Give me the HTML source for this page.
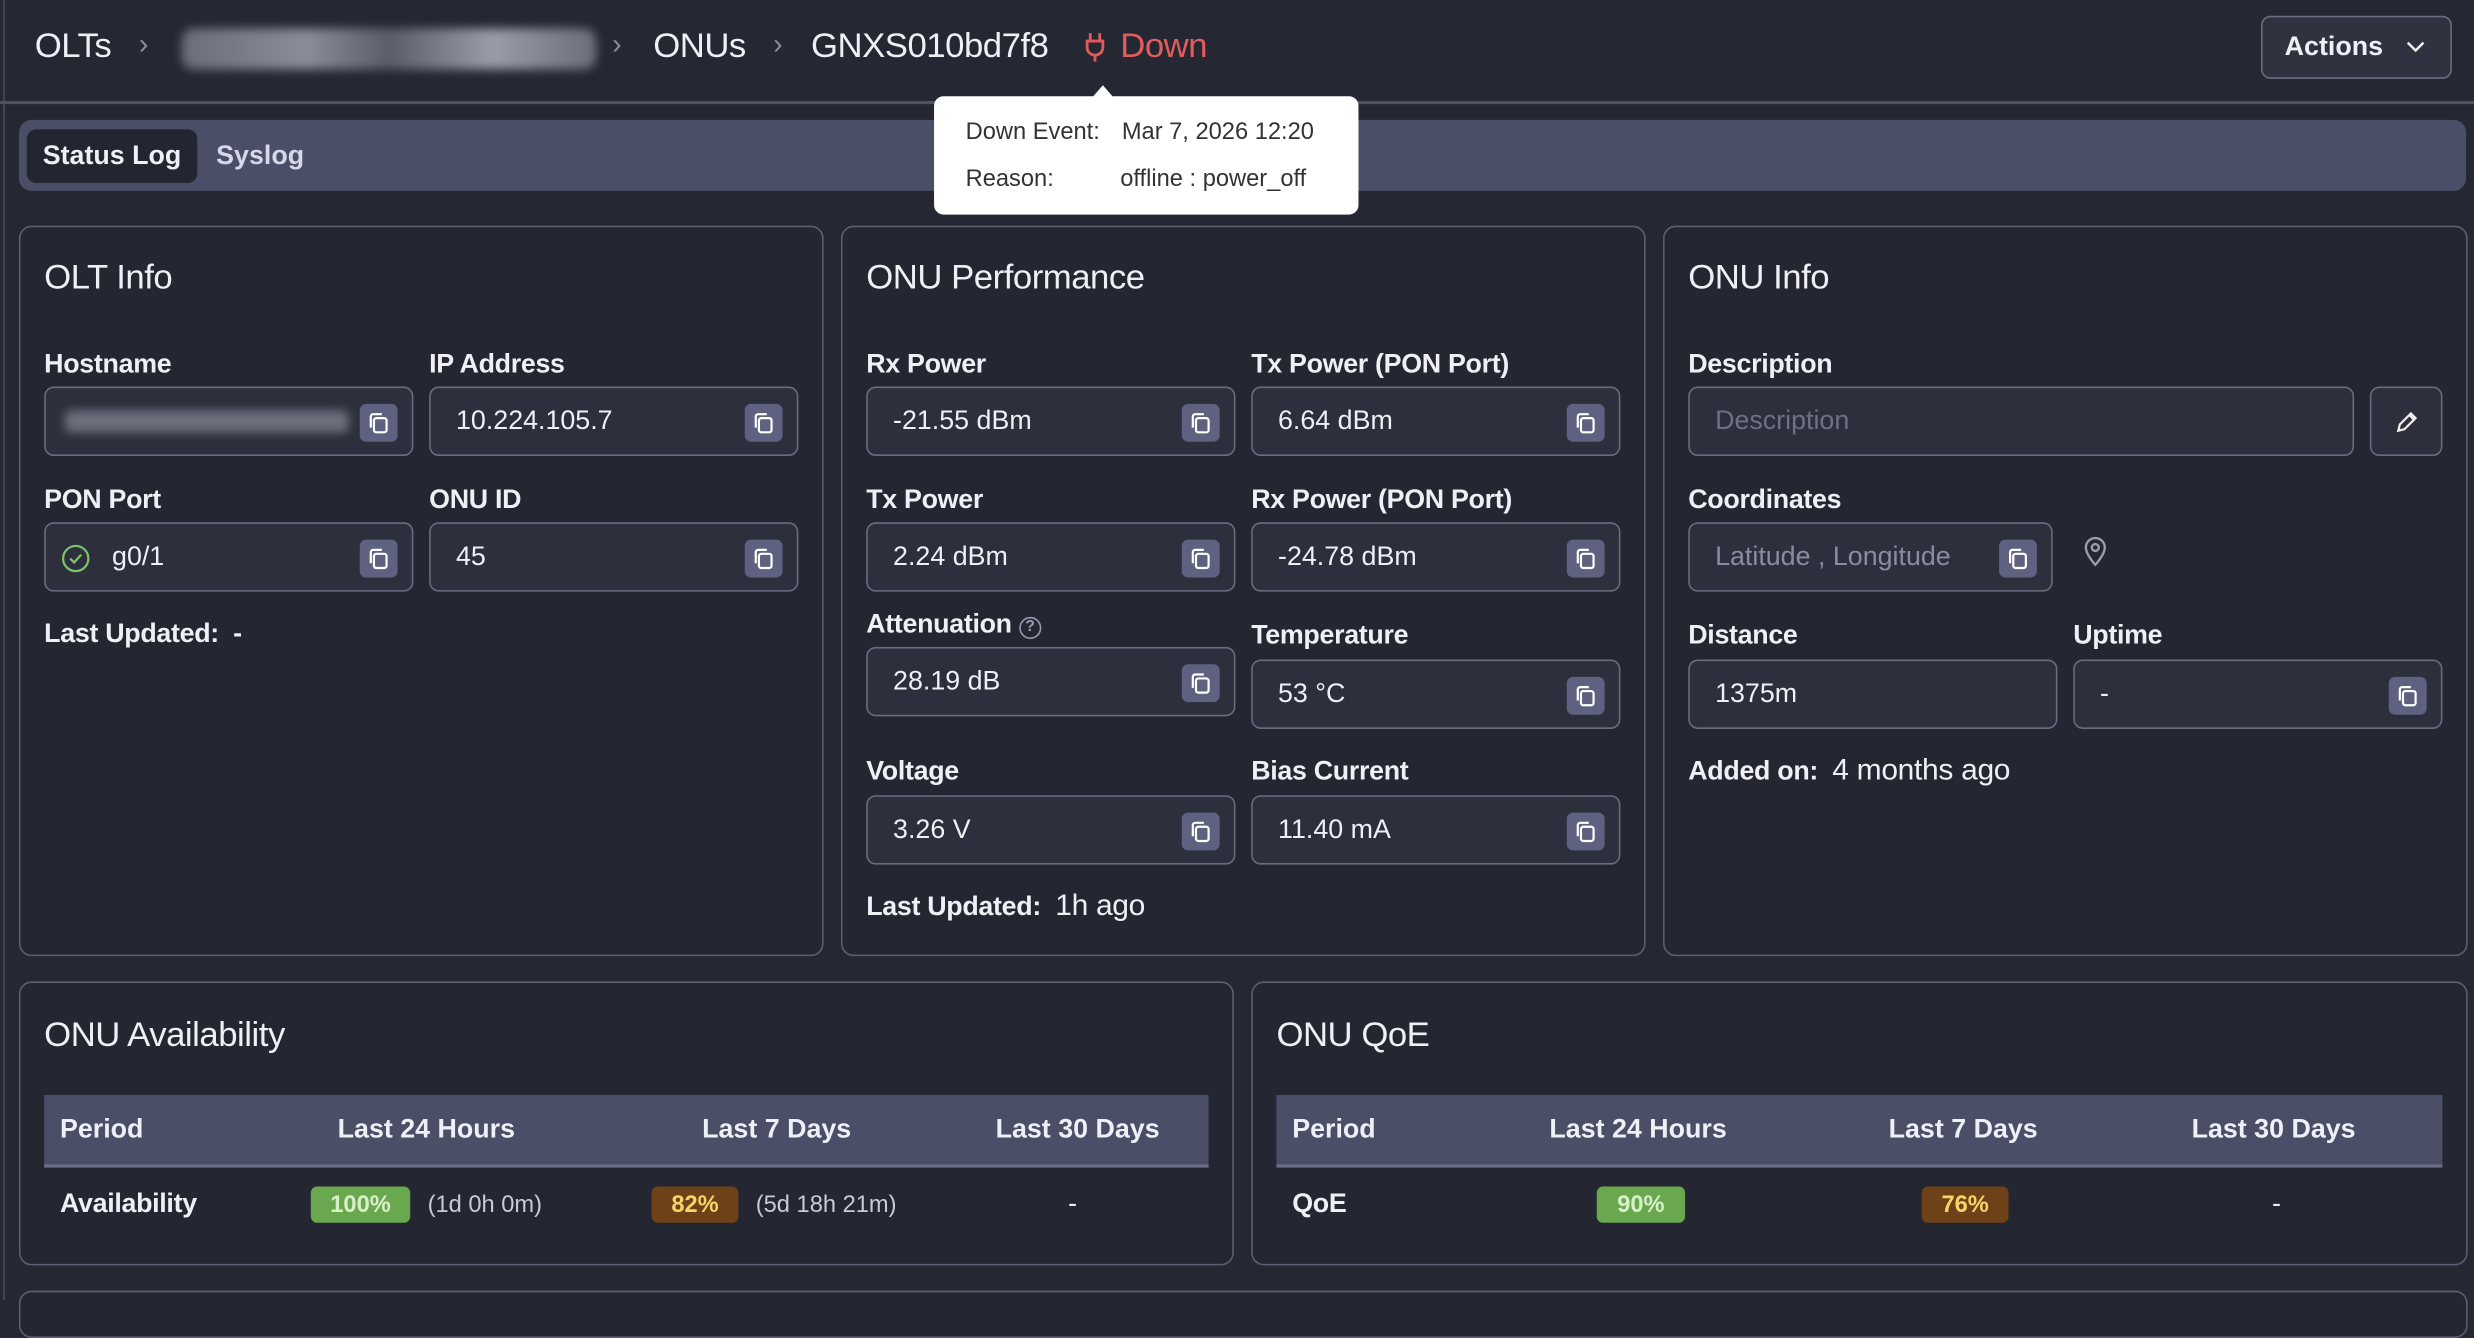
<!DOCTYPE html>
<html><head><meta charset="utf-8"><style>
*{box-sizing:border-box;margin:0;padding:0}
html,body{width:2474px;height:1300px;overflow:hidden;background:#252733}
#w{position:absolute;left:0;top:0;width:1568px;height:824px;transform:scale(1.5778);transform-origin:0 0;font-family:"Liberation Sans",sans-serif;color:#eef0f6}
.a{position:absolute;white-space:nowrap}
.card{position:absolute;border:1px solid #5c5f72;border-radius:8px;background:#242631}
.t{font-size:22px;letter-spacing:-0.3px}
.lb{font-size:17px;font-weight:600;letter-spacing:-0.2px}
.in{position:absolute;height:44px;border:1px solid #6a6d80;border-radius:6px;background:#2d2f3c;font-size:17px;line-height:42px;padding-left:16px}
.cp{position:absolute;right:9px;top:10px;width:24px;height:24px;background:#5e6280;border-radius:4px}
.cp svg{position:absolute;left:5px;top:5px}
.th{position:absolute;height:46px;background:#4a4e66;border-bottom:2px solid #6a6e88;font-size:17px;font-weight:600;line-height:44px}
.bd{position:absolute;height:23px;border-radius:4px;font-size:15px;font-weight:600;line-height:23px;text-align:center}
</style></head><body><div id="w">
<!-- header -->
<div class="a" style="left:2px;top:0;width:1px;height:824px;background:#4a4c58"></div>
<div class="a" style="left:0;top:64px;width:1568px;height:2px;background:#4f5260"></div>
<div class="a t" style="left:22px;top:16px">OLTs</div>
<div class="a" style="left:88px;top:18px;font-size:18px;color:#8a8ea0">›</div>
<div class="a" style="left:115px;top:18px;width:263px;height:26px;border-radius:8px;background:linear-gradient(90deg,#6a6d7a,#8a8d98 30%,#5a5d6a 50%,#9a9da8 75%,#6a6d7a);filter:blur(3px)"></div>
<div class="a" style="left:388px;top:18px;font-size:18px;color:#8a8ea0">›</div>
<div class="a t" style="left:414px;top:16px">ONUs</div>
<div class="a" style="left:490px;top:18px;font-size:18px;color:#8a8ea0">›</div>
<div class="a t" style="left:514px;top:16px">GNXS010bd7f8</div>
<svg class="a" style="left:687px;top:20px" width="14" height="20" viewBox="0 0 14 20"><path d="M4 1v5M10 1v5M2 6h10v4a5 5 0 0 1-10 0zM7 15v4" stroke="#e05a5a" stroke-width="1.8" fill="none"/></svg>
<div class="a t" style="left:710px;top:16px;color:#e25c5c">Down</div>
<div class="a" style="left:1433px;top:10px;width:121px;height:40px;border:1px solid #6a6d80;border-radius:6px;background:#30333f;font-size:17px;font-weight:600;line-height:38px;padding-left:14px">Actions<svg style="position:absolute;right:16px;top:15px" width="12" height="8" viewBox="0 0 12 8"><path d="M1 1l5 5 5-5" stroke="#eee" stroke-width="1.6" fill="none"/></svg></div>
<!-- tabs -->
<div class="a" style="left:12px;top:76px;width:1551px;height:45px;background:#4a4e66;border-radius:8px"></div>
<div class="a" style="left:17px;top:82px;width:108px;height:34px;background:#232530;border-radius:6px;font-size:17px;font-weight:600;line-height:34px;text-align:center">Status Log</div>
<div class="a" style="left:137px;top:89px;font-size:17px;font-weight:600;color:#d6d8ea">Syslog</div>
<!-- row 1 cards -->
<div class="card" style="left:12px;top:143px;width:510px;height:463px"></div>
<div class="card" style="left:533px;top:143px;width:510px;height:463px"></div>
<div class="card" style="left:1054px;top:143px;width:510px;height:463px"></div>
<div class="a t" style="left:28px;top:163px">OLT Info</div>
<div class="a t" style="left:549px;top:163px">ONU Performance</div>
<div class="a t" style="left:1070px;top:163px">ONU Info</div>
<!-- OLT info -->
<div class="a lb" style="left:28px;top:221px">Hostname</div>
<div class="a lb" style="left:272px;top:221px">IP Address</div>
<div class="in" style="left:28px;top:245px;width:234px"><div style="position:absolute;left:12px;top:14px;width:180px;height:14px;background:#6d707c;filter:blur(3px);border-radius:4px"></div><div class="cp"><svg width="14" height="14" viewBox="0 0 14 14"><rect x="4" y="4" width="8" height="9" rx="1.5" stroke="#fff" stroke-width="1.4" fill="none"/><path d="M2 10V3a1.5 1.5 0 0 1 1.5-1.5H9" stroke="#fff" stroke-width="1.4" fill="none"/></svg></div></div>
<div class="in" style="left:272px;top:245px;width:234px">10.224.105.7<div class="cp"><svg width="14" height="14" viewBox="0 0 14 14"><rect x="4" y="4" width="8" height="9" rx="1.5" stroke="#fff" stroke-width="1.4" fill="none"/><path d="M2 10V3a1.5 1.5 0 0 1 1.5-1.5H9" stroke="#fff" stroke-width="1.4" fill="none"/></svg></div></div>
<div class="a lb" style="left:28px;top:307px">PON Port</div>
<div class="a lb" style="left:272px;top:307px">ONU ID</div>
<div class="in" style="left:28px;top:331px;width:234px;padding-left:42px"><svg style="position:absolute;left:10px;top:13px" width="18" height="18" viewBox="0 0 18 18"><circle cx="9" cy="9" r="8" stroke="#7cc46a" stroke-width="1.4" fill="none"/><path d="M5.5 9l2.5 2.5 4.5-5" stroke="#7cc46a" stroke-width="1.4" fill="none"/></svg>g0/1<div class="cp"><svg width="14" height="14" viewBox="0 0 14 14"><rect x="4" y="4" width="8" height="9" rx="1.5" stroke="#fff" stroke-width="1.4" fill="none"/><path d="M2 10V3a1.5 1.5 0 0 1 1.5-1.5H9" stroke="#fff" stroke-width="1.4" fill="none"/></svg></div></div>
<div class="in" style="left:272px;top:331px;width:234px">45<div class="cp"><svg width="14" height="14" viewBox="0 0 14 14"><rect x="4" y="4" width="8" height="9" rx="1.5" stroke="#fff" stroke-width="1.4" fill="none"/><path d="M2 10V3a1.5 1.5 0 0 1 1.5-1.5H9" stroke="#fff" stroke-width="1.4" fill="none"/></svg></div></div>
<div class="a lb" style="left:28px;top:392px">Last Updated:&nbsp; -</div>
<!-- perf -->
<div class="a lb" style="left:549px;top:221px">Rx Power</div>
<div class="a lb" style="left:793px;top:221px">Tx Power (PON Port)</div>
<div class="in" style="left:549px;top:245px;width:234px">-21.55 dBm<div class="cp"><svg width="14" height="14" viewBox="0 0 14 14"><rect x="4" y="4" width="8" height="9" rx="1.5" stroke="#fff" stroke-width="1.4" fill="none"/><path d="M2 10V3a1.5 1.5 0 0 1 1.5-1.5H9" stroke="#fff" stroke-width="1.4" fill="none"/></svg></div></div>
<div class="in" style="left:793px;top:245px;width:234px">6.64 dBm<div class="cp"><svg width="14" height="14" viewBox="0 0 14 14"><rect x="4" y="4" width="8" height="9" rx="1.5" stroke="#fff" stroke-width="1.4" fill="none"/><path d="M2 10V3a1.5 1.5 0 0 1 1.5-1.5H9" stroke="#fff" stroke-width="1.4" fill="none"/></svg></div></div>
<div class="a lb" style="left:549px;top:307px">Tx Power</div>
<div class="a lb" style="left:793px;top:307px">Rx Power (PON Port)</div>
<div class="in" style="left:549px;top:331px;width:234px">2.24 dBm<div class="cp"><svg width="14" height="14" viewBox="0 0 14 14"><rect x="4" y="4" width="8" height="9" rx="1.5" stroke="#fff" stroke-width="1.4" fill="none"/><path d="M2 10V3a1.5 1.5 0 0 1 1.5-1.5H9" stroke="#fff" stroke-width="1.4" fill="none"/></svg></div></div>
<div class="in" style="left:793px;top:331px;width:234px">-24.78 dBm<div class="cp"><svg width="14" height="14" viewBox="0 0 14 14"><rect x="4" y="4" width="8" height="9" rx="1.5" stroke="#fff" stroke-width="1.4" fill="none"/><path d="M2 10V3a1.5 1.5 0 0 1 1.5-1.5H9" stroke="#fff" stroke-width="1.4" fill="none"/></svg></div></div>
<div class="a lb" style="left:549px;top:386px">Attenuation <span style="display:inline-block;width:14px;height:14px;border:1px solid #9a9db0;border-radius:50%;font-size:10px;line-height:12px;text-align:center;color:#9a9db0;vertical-align:1px">?</span></div>
<div class="a lb" style="left:793px;top:393px">Temperature</div>
<div class="in" style="left:549px;top:410px;width:234px">28.19 dB<div class="cp"><svg width="14" height="14" viewBox="0 0 14 14"><rect x="4" y="4" width="8" height="9" rx="1.5" stroke="#fff" stroke-width="1.4" fill="none"/><path d="M2 10V3a1.5 1.5 0 0 1 1.5-1.5H9" stroke="#fff" stroke-width="1.4" fill="none"/></svg></div></div>
<div class="in" style="left:793px;top:418px;width:234px">53 °C<div class="cp"><svg width="14" height="14" viewBox="0 0 14 14"><rect x="4" y="4" width="8" height="9" rx="1.5" stroke="#fff" stroke-width="1.4" fill="none"/><path d="M2 10V3a1.5 1.5 0 0 1 1.5-1.5H9" stroke="#fff" stroke-width="1.4" fill="none"/></svg></div></div>
<div class="a lb" style="left:549px;top:479px">Voltage</div>
<div class="a lb" style="left:793px;top:479px">Bias Current</div>
<div class="in" style="left:549px;top:504px;width:234px">3.26 V<div class="cp"><svg width="14" height="14" viewBox="0 0 14 14"><rect x="4" y="4" width="8" height="9" rx="1.5" stroke="#fff" stroke-width="1.4" fill="none"/><path d="M2 10V3a1.5 1.5 0 0 1 1.5-1.5H9" stroke="#fff" stroke-width="1.4" fill="none"/></svg></div></div>
<div class="in" style="left:793px;top:504px;width:234px">11.40 mA<div class="cp"><svg width="14" height="14" viewBox="0 0 14 14"><rect x="4" y="4" width="8" height="9" rx="1.5" stroke="#fff" stroke-width="1.4" fill="none"/><path d="M2 10V3a1.5 1.5 0 0 1 1.5-1.5H9" stroke="#fff" stroke-width="1.4" fill="none"/></svg></div></div>
<div class="a lb" style="left:549px;top:564px">Last Updated:&nbsp; <span style="font-weight:400;font-size:19px">1h ago</span></div>
<!-- ONU info -->
<div class="a lb" style="left:1070px;top:221px">Description</div>
<div class="in" style="left:1070px;top:245px;width:422px;color:#6e7184">Description</div>
<div class="a" style="left:1502px;top:245px;width:46px;height:44px;border:1px solid #6a6d80;border-radius:6px;background:#2d2f3c"><svg style="position:absolute;left:15px;top:14px" width="15" height="15" viewBox="0 0 15 15"><path d="M2 13l1-4 7-7 3 3-7 7z M9 3l3 3" stroke="#eee" stroke-width="1.4" fill="none"/></svg></div>
<div class="a lb" style="left:1070px;top:307px">Coordinates</div>
<div class="in" style="left:1070px;top:331px;width:231px;color:#8a8da0">Latitude , Longitude<div class="cp"><svg width="14" height="14" viewBox="0 0 14 14"><rect x="4" y="4" width="8" height="9" rx="1.5" stroke="#fff" stroke-width="1.4" fill="none"/><path d="M2 10V3a1.5 1.5 0 0 1 1.5-1.5H9" stroke="#fff" stroke-width="1.4" fill="none"/></svg></div></div>
<svg class="a" style="left:1320px;top:339px" width="16" height="20" viewBox="0 0 16 20"><path d="M8 19s-6-6.5-6-11a6 6 0 0 1 12 0c0 4.5-6 11-6 11z" stroke="#9a9db0" stroke-width="1.5" fill="none"/><circle cx="8" cy="8" r="2.2" stroke="#9a9db0" stroke-width="1.5" fill="none"/></svg>
<div class="a lb" style="left:1070px;top:393px">Distance</div>
<div class="a lb" style="left:1314px;top:393px">Uptime</div>
<div class="in" style="left:1070px;top:418px;width:234px">1375m</div>
<div class="in" style="left:1314px;top:418px;width:234px">-<div class="cp"><svg width="14" height="14" viewBox="0 0 14 14"><rect x="4" y="4" width="8" height="9" rx="1.5" stroke="#fff" stroke-width="1.4" fill="none"/><path d="M2 10V3a1.5 1.5 0 0 1 1.5-1.5H9" stroke="#fff" stroke-width="1.4" fill="none"/></svg></div></div>
<div class="a lb" style="left:1070px;top:478px">Added on:&nbsp; <span style="font-weight:400;font-size:19px">4 months ago</span></div>
<!-- row 2 -->
<div class="card" style="left:12px;top:622px;width:770px;height:180px"></div>
<div class="card" style="left:793px;top:622px;width:771px;height:180px"></div>
<div class="card" style="left:12px;top:818px;width:1552px;height:30px"></div>
<div class="a t" style="left:28px;top:643px">ONU Availability</div>
<div class="a t" style="left:809px;top:643px">ONU QoE</div>
<div class="th" style="left:28px;top:694px;width:738px"><span class="a" style="left:10px">Period</span><span class="a" style="left:186px">Last 24 Hours</span><span class="a" style="left:417px">Last 7 Days</span><span class="a" style="left:603px">Last 30 Days</span></div>
<div class="th" style="left:809px;top:694px;width:739px"><span class="a" style="left:10px">Period</span><span class="a" style="left:173px">Last 24 Hours</span><span class="a" style="left:388px">Last 7 Days</span><span class="a" style="left:580px">Last 30 Days</span></div>
<div class="a lb" style="left:38px;top:753px">Availability</div>
<div class="bd" style="left:197px;top:752px;width:63px;background:#6aa84f;color:#d8f0c8">100%</div>
<div class="a" style="left:271px;top:755px;font-size:15px;color:#c8cad6">(1d 0h 0m)</div>
<div class="bd" style="left:413px;top:752px;width:55px;background:#6e4218;color:#f6d469">82%</div>
<div class="a" style="left:479px;top:755px;font-size:15px;color:#c8cad6">(5d 18h 21m)</div>
<div class="a" style="left:677px;top:753px;font-size:17px">-</div>
<div class="a lb" style="left:819px;top:753px">QoE</div>
<div class="bd" style="left:1012px;top:752px;width:56px;background:#6aa84f;color:#d8f0c8">90%</div>
<div class="bd" style="left:1218px;top:752px;width:55px;background:#6e4218;color:#f6d469">76%</div>
<div class="a" style="left:1440px;top:753px;font-size:17px">-</div>
<!-- tooltip -->
<div class="a" style="left:592px;top:61px;width:269px;height:75px;background:#fff;border-radius:6px;color:#333;font-size:15px"><div style="position:absolute;left:100px;top:-7px;width:0;height:0;border-left:7px solid transparent;border-right:7px solid transparent;border-bottom:8px solid #fff"></div><span class="a" style="left:20px;top:14px">Down Event:</span><span class="a" style="left:119px;top:14px">Mar 7, 2026 12:20</span><span class="a" style="left:20px;top:44px">Reason:</span><span class="a" style="left:118px;top:44px">offline : power_off</span></div>
</div></body></html>
